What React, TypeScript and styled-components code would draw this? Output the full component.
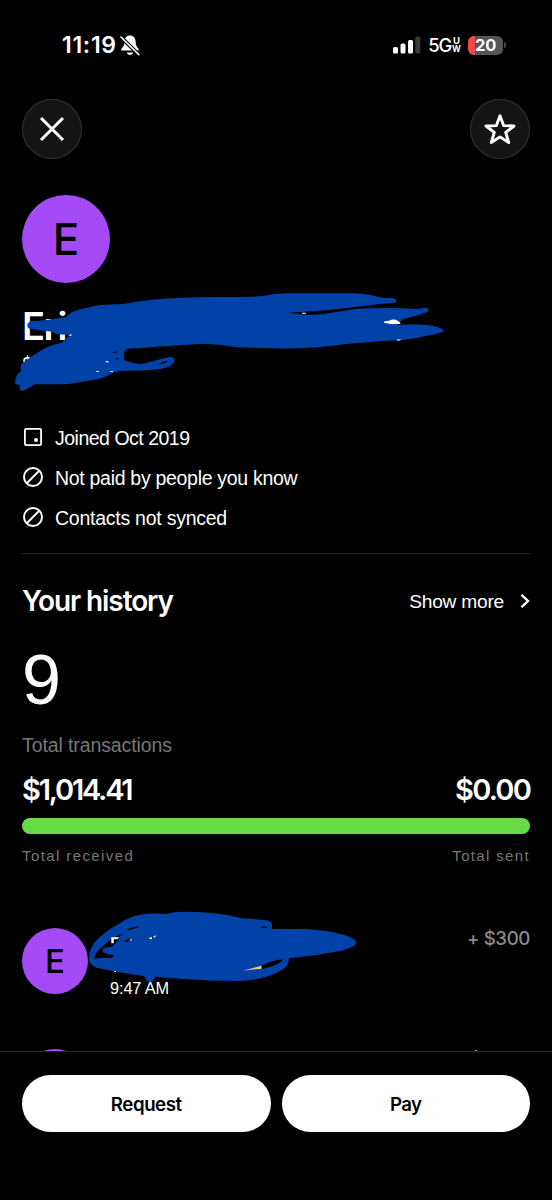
import React from "react";
import styled, { createGlobalStyle } from "styled-components";

const Global = createGlobalStyle`
  *, *::before, *::after { box-sizing: border-box; }
  body { margin: 0; background: #000; }
  button { font: inherit; border: 0; padding: 0; cursor: pointer; }
`;

const Screen = styled.main`
  width: 552px;
  height: 1200px;
  overflow: hidden;
  display: flex;
  flex-direction: column;
  background: #000;
  color: #fff;
  font-family: Inter, "Liberation Sans", sans-serif;
`;

const Text = styled.span<{ $size: number; $line: number; $weight?: number; $track?: number; $color?: string }>`
  display: block;
  white-space: nowrap;
  font-size: ${(p) => p.$size}px;
  line-height: ${(p) => p.$line}px;
  font-weight: ${(p) => p.$weight ?? 400};
  letter-spacing: ${(p) => p.$track ?? 0}px;
  color: ${(p) => p.$color ?? "#fff"};
`;

const Body = styled(Text)`
  font-family: "Liberation Sans", Arial, sans-serif;
`;

const StatusBar = styled.header`
  height: 99px;
  padding: 31px 46px 0 62px;
  display: flex;
  justify-content: space-between;
  align-items: flex-start;
`;

const StatusGroup = styled.div<{ $gap: number }>`
  height: 28px;
  display: flex;
  align-items: center;
  gap: ${(p) => p.$gap}px;
`;

const Band = styled.div`
  width: 9px;
  margin-left: -9px;
  text-align: center;
`;

const Battery = styled.div`
  width: 35px;
  height: 19px;
  border-radius: 6px;
  display: grid;
  place-items: center;
  background: linear-gradient(to right, #f5474a 7px, #555557 7px);
`;

const BatteryCap = styled.div`
  width: 2px;
  height: 6px;
  margin-left: 1px;
  border-radius: 0 2px 2px 0;
  background: #48484a;
`;

const BatteryWrap = styled.div`
  display: flex;
  align-items: center;
`;

const TopActions = styled.nav`
  height: 60px;
  padding: 0 22px;
  display: flex;
  justify-content: space-between;
`;

const RoundButton = styled.button`
  width: 60px;
  height: 60px;
  border-radius: 50%;
  display: grid;
  place-items: center;
  color: #fff;
  background: #141414;
  box-shadow: inset 0 0 0 1px #303030;
`;

const Profile = styled.section`
  position: relative;
  height: 258px;
  padding: 36px 22px 0;
`;

const Avatar = styled.div<{ $size: number }>`
  flex: none;
  width: ${(p) => p.$size}px;
  height: ${(p) => p.$size}px;
  border-radius: 50%;
  display: grid;
  place-items: center;
  background: #a44bf7;
`;

const Name = styled.div`
  padding: 20px 0 0 0;
`;

const Marker = styled.svg<{ $top: number; $left: number }>`
  position: absolute;
  top: ${(p) => p.$top}px;
  left: ${(p) => p.$left}px;
  pointer-events: none;
`;

const Facts = styled.ul`
  list-style: none;
  margin: 0 22px;
  padding: 1px 0 0;
  height: 137px;
  border-bottom: 1px solid #262626;
`;

const Fact = styled.li`
  height: 40px;
  display: flex;
  align-items: center;
  gap: 11px;
  svg { margin-top: -3px; }
`;

const History = styled.section`
  padding: 26px 22px 0;
`;

const Spread = styled.div`
  display: flex;
  justify-content: space-between;
  align-items: center;
`;

const ShowMore = styled.button`
  display: flex;
  align-items: center;
  gap: 16px;
  background: none;
  margin-top: 1px;
  svg { margin-top: -1px; }
`;

const CountBlock = styled.div`
  padding: 22px 0 0;
`;

const Bar = styled.div`
  height: 16px;
  margin: 13px 0 12px;
  border-radius: 8px;
  background: #66dc46;
`;

const Activity = styled.section`
  height: 184px;
  margin-top: auto;
  padding-top: 61px;
  overflow: hidden;
`;

const Transaction = styled.article`
  position: relative;
  height: 121px;
  padding: 0 22px;
  display: flex;
  align-items: flex-start;
`;

const TransactionTime = styled.div`
  flex: 1;
  padding: 50px 0 0 22px;
`;

const Amount = styled(Text)`
  padding-top: 1px;
`;

const NextTick = styled.i`
  width: 2px;
  height: 1px;
  margin: 1px 53px 0 auto;
  background: #a0a0a0;
`;

const Footer = styled.footer`
  flex: none;
  height: 149px;
  padding: 23px 22px 0;
  display: grid;
  grid-template-columns: 1fr 1fr;
  gap: 11px;
  align-items: start;
  border-top: 1px solid #282828;
`;

const ActionButton = styled.button`
  height: 57px;
  padding-top: 2px;
  border-radius: 29px;
  display: grid;
  place-items: center;
  background: #fff;
`;

const BLUE = "#0042a8";

const BellOff = () => (
  <svg width="20" height="21" viewBox="0 0 20 21">
    <path d="M10 .5c-3.6 0-5.5 2.6-5.6 6.1C4.3 10.500 3.200 12 1.200 14v1.600h17.600V14c-2-2-3.100-3.500-3.200-7.400C15.500 3.100 13.600.5 10 .5Z" fill="#fff" />
    <path d="M6.800 17.500h6.400c-.4 1.500-1.600 2.500-3.200 2.500s-2.800-1-3.200-2.500Z" fill="#fff" />
    <path d="M.5 1.500 19 20" stroke="#000" strokeWidth="3.800" />
    <path d="M1 2 18.800 19.600" stroke="#fff" strokeWidth="1.600" strokeLinecap="round" />
  </svg>
);

const Signal = () => (
  <svg width="28" height="18" viewBox="0 0 28 18">
    <rect x="0" y="11" width="5" height="6.500" rx="1.500" fill="#fff" />
    <rect x="7.500" y="7.500" width="5" height="10" rx="1.500" fill="#fff" />
    <rect x="15" y="4" width="5" height="13.500" rx="1.500" fill="#fff" />
    <rect x="22.300" y="0.500" width="5" height="17" rx="1.500" fill="#3a3a3c" />
  </svg>
);

const Calendar = () => (
  <svg width="22" height="22" viewBox="0 0 22 22" fill="none">
    <rect x="2.900" y="2.900" width="16.200" height="16.200" rx="1.300" stroke="#fff" strokeWidth="1.800" />
    <circle cx="14" cy="14" r="2" fill="#fff" />
  </svg>
);

const Slashed = () => (
  <svg width="22" height="22" viewBox="0 0 22 22" fill="none" stroke="#fff" strokeWidth="2">
    <circle cx="11" cy="11" r="9" />
    <path d="M4.800 17.200 17.200 4.800" />
  </svg>
);

const NameMarker = () => (
  <Marker $top={126} $left={0} width="460" height="112" viewBox="0 285 460 112">
    <path fill={BLUE} d="M30 329Q26 327 28 323Q31 320 37 321L50 319.500L65 317.300Q72 311 80 309.300L100 305L123 304Q150 299 177 298Q205 296.500 230 297Q250 297 263 296Q275 293.500 286 293.300H353Q370 294 383 298L394 298.200Q397 300 396 302.500L380 304Q340 309 320 310.700L288 312.700L303 314.500Q314 315 323 314L357 308.700Q387 307 417 309L425 307.800Q430 308 428 311.500Q417 316 403 319L397 325Q422 323 433 326Q443 328 443.500 330.500Q442 333 433 334.500Q412 339 403 340Q380 341 353 343.300L320 347Q300 349 275 348.300L237 347.300Q220 344 203 343.700L127 348.700L124 352V360Q131 363 140 364Q148 363 157 360L167 357.500Q174 356 174.500 360Q174 366 163 368.500Q145 371 123 370.700Q115 371 111 374Q102 379 90 380.500L67 384.300L35 384.300L25 390Q21 392 19.500 388.500L20 385Q14 385 15.200 381Q16 374 21.500 370.700Q19 366 22.500 363Q32 356 43 349.300Q53 344 61.700 342.700Q66 337 71.700 335L57 334.300L52 331.700Z" />
    <path fill="#000" d="M158 364.500Q163 361 168 360.800Q166 364 158 364.500ZM109 352.500 118 351.200 117 352.500ZM115 359 118.500 357.700 118 359.500Z" />
    <path fill="#fff" d="M302 312.700h4v1.100h-4ZM384 321.500l5-.8q5-2.500 9 .2 3 2 2.500 3.100h-10l-6.500-1.300ZM397 339.500h4.500l-2 1h-3ZM105 361.500l2.500-.8 1.500 2-2-.4ZM96 371h3v.8h-3ZM110 371.200h3v.7h-3ZM68 335.300l4-1-1 1.700Z" />
  </Marker>
);

const TransactionMarker = () => (
  <Marker $top={-20} $left={85} width="280" height="80" viewBox="85 908 280 80">
    <path fill={BLUE} d="M89 959Q89 949 95 942Q105 931 117 925Q130 916 143 914.300Q155 913 167 914Q175 911.500 187 911.800Q218 912 240 918L264 920Q273 921 272 925V929H303Q324 930 334 932.500Q356 937 356 942.500Q355 948 340 951Q315 956 289 958.300Q289 967 280 971Q265 980 237 981Q210 981 183 979L155 976.700Q153 982 149 982.500Q146 980 144 976Q122 973 97 967.700Q89 965 89 959Z" />
    <path fill="#000" d="M94 959Q95 952 104 945Q112 937 123 933.700L120 936Q117 943 111 947Q103 947 102.500 951Q103 954 114 955L112 958Q102 957 94 959ZM127 930Q132 926 140 926.500L130 930ZM123 942 128 939 132 938.500 131 941ZM147 939 153 937 152 939ZM261 966Q272 960 283 959.300Q280 965 262 969ZM260 927.500 266 926 267 928Z" />
    <path fill="#fff" d="M111.300 937.300h8l-2 2h-3.500v4h-2.500ZM129 940.500l2.500-2v2ZM149 938l3-1v2h-3ZM153 937l3-2-1 2.500ZM114.500 971h1.500v1h-1.500Z" />
    <path fill="#e8c583" d="M243 970.500 261.500 965.800v3Z" />
  </Marker>
);

export default function App() {
  return (
    <Screen>
      <Global />
      <StatusBar>
        <StatusGroup $gap={3}>
          <Text $size={23} $line={28} $weight={600} $track={0.7}>11:19</Text>
          <BellOff />
        </StatusGroup>
        <StatusGroup $gap={7}>
          <Signal />
          <StatusGroup $gap={10}>
            <Text $size={18.500} $line={28} $weight={500} $track={-1.300}>5G</Text>
            <Band>
              <Text $size={9.500} $line={8} $weight={700}>U</Text>
              <Text $size={8.500} $line={8} $weight={700}>W</Text>
            </Band>
          </StatusGroup>
          <BatteryWrap>
            <Battery><Text $size={16.500} $line={19} $weight={700} $track={-0.2}>20</Text></Battery>
            <BatteryCap />
          </BatteryWrap>
        </StatusGroup>
      </StatusBar>

      <TopActions>
        <RoundButton aria-label="Close">
          <svg width="26" height="26" viewBox="0 0 26 26" stroke="#fff" strokeWidth="3">
            <path d="M2 2 24 24M24 2 2 24" />
          </svg>
        </RoundButton>
        <RoundButton aria-label="Favorite">
          <svg width="34" height="34" viewBox="0 0 34 34" fill="none" stroke="#fff" strokeWidth="2.900" strokeLinejoin="round">
            <path d="M17 3.800 20.600 13.600 31 14 22.700 20.400 25.700 30.500 17 24.900 8.300 30.500 11.300 20.400 3 14 13.400 13.600Z" />
          </svg>
        </RoundButton>
      </TopActions>

      <Profile>
        <Avatar $size={88}><Text $size={44} $line={88} $weight={500} $color="#000">E</Text></Avatar>
        <Name>
          <Text $size={38} $line={46} $weight={600} $track={-1.500}>Eri</Text>
          <Text $size={17} $line={30}>$</Text>
        </Name>
        <NameMarker />
      </Profile>

      <Facts>
        <Fact><Calendar /><Body $size={19.500} $line={26} $track={-0.500}>Joined Oct 2019</Body></Fact>
        <Fact><Slashed /><Body $size={19.500} $line={26} $track={-0.300}>Not paid by people you know</Body></Fact>
        <Fact><Slashed /><Body $size={19.500} $line={26} $track={-0.250}>Contacts not synced</Body></Fact>
      </Facts>

      <History>
        <Spread>
          <Text $size={28} $line={42} $weight={600} $track={-1.100}>Your history</Text>
          <ShowMore>
            <Body $size={19.200} $line={26} $track={-0.250}>Show more</Body>
            <svg width="10" height="16" viewBox="0 0 10 16" fill="none" stroke="#fff" strokeWidth="2.400">
              <path d="M1.500 1.800 8 8 1.500 14.200" />
            </svg>
          </ShowMore>
        </Spread>
        <CountBlock>
          <Body $size={70} $line={72}>9</Body>
          <Body $size={19.500} $line={59} $track={-0.1} $color="#777">Total transactions</Body>
        </CountBlock>
        <Spread>
          <Text $size={29} $line={30} $weight={600} $track={-2.200}>$1,014.41</Text>
          <Text $size={29} $line={30} $weight={600} $track={-1.800}>$0.00</Text>
        </Spread>
        <Bar />
        <Spread>
          <Body $size={15} $line={20} $track={1.400} $color="#777">Total received</Body>
          <Body $size={15} $line={20} $track={1.350} $color="#777">Total sent</Body>
        </Spread>
      </History>

      <Activity>
        <Transaction>
          <Avatar $size={66}><Text $size={33} $line={66} $weight={500} $color="#000">E</Text></Avatar>
          <TransactionTime><Body $size={16.300} $line={20} $track={-0.1}>9:47 AM</Body></TransactionTime>
          <Amount $size={18.700} $line={20} $weight={500} $track={-0.4} $color="#8a8a8a">+ $300</Amount>
          <TransactionMarker />
        </Transaction>
        <Transaction>
          <Avatar $size={66} />
          <NextTick />
        </Transaction>
      </Activity>

      <Footer>
        <ActionButton><Text $size={18.700} $line={28} $weight={600} $track={-0.45} $color="#000">Request</Text></ActionButton>
        <ActionButton><Text $size={18.700} $line={28} $weight={600} $track={-0.6} $color="#000">Pay</Text></ActionButton>
      </Footer>
    </Screen>
  );
}
